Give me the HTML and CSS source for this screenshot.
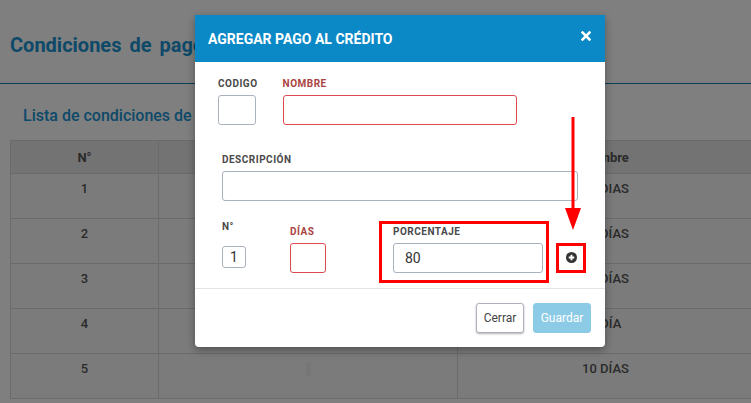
FILE: index.html
```html
<!DOCTYPE html>
<html lang="es">
<head>
    <meta charset="UTF-8">
    <meta name="viewport" content="width=device-width, initial-scale=1.0">
    <title>Condiciones de pago</title>
    <link rel="stylesheet" href="styles.css">
</head>
<body>
    <header class="page-head">
        <h1>Condiciones de pago</h1>
    </header>
    <main class="page-body">
        <h2 class="list-title">Lista de condiciones de pago</h2>
        <table class="grid">
            <colgroup>
                <col class="col-num">
                <col class="col-desc">
                <col class="col-name">
            </colgroup>
            <thead>
                <tr><th>N°</th><th></th><th>Nombre</th></tr>
            </thead>
            <tbody>
                <tr><td>1</td><td></td><td>30 DIAS</td></tr>
                <tr><td>2</td><td></td><td>15 DÍAS</td></tr>
                <tr><td>3</td><td></td><td>45 DÍAS</td></tr>
                <tr><td>4</td><td></td><td>1 DÍA</td></tr>
                <tr><td>5</td><td><span class="ghost"></span></td><td>10 DÍAS</td></tr>
            </tbody>
        </table>
    </main>

    <div class="backdrop"></div>

    <div class="modal">
        <div class="modal-head">
            <h3>AGREGAR PAGO AL CRÉDITO</h3>
            <button class="close" type="button">
                <svg width="10" height="10" viewBox="0 0 10 10"><path d="M1.5 1.5 L8.5 8.5 M8.5 1.5 L1.5 8.5" stroke="#fff" stroke-width="2.6" stroke-linecap="square"/></svg>
            </button>
        </div>
        <div class="modal-body">
            <div class="row row-top">
                <div class="field f-code">
                    <label>CODIGO</label>
                    <input type="text">
                </div>
                <div class="field f-name has-error">
                    <label>NOMBRE</label>
                    <input type="text">
                </div>
            </div>
            <div class="row row-desc">
                <div class="field f-desc">
                    <label>DESCRIPCIÓN</label>
                    <input type="text">
                </div>
            </div>
            <div class="row row-quota">
                <div class="field f-no">
                    <label>N°</label>
                    <input type="text" value="1">
                </div>
                <div class="field f-days has-error">
                    <label>DÍAS</label>
                    <input type="text">
                </div>
                <div class="field f-pct marked">
                    <label>PORCENTAJE</label>
                    <input type="text" value="80">
                </div>
                <button class="add marked" type="button">
                    <svg width="11" height="11" viewBox="0 0 12 12"><circle cx="6" cy="6" r="6" fill="#333"/><path d="M6 3 V9 M3 6 H9" stroke="#fff" stroke-width="2"/></svg>
                </button>
            </div>
        </div>
        <div class="modal-foot">
            <button class="btn btn-close" type="button">Cerrar</button>
            <button class="btn btn-save" type="button">Guardar</button>
        </div>
    </div>

    <!-- flecha roja que señala el botón de agregar -->
    <svg class="pointer" width="18" height="116" viewBox="0 0 18 116">
        <rect x="7.5" y="2" width="3" height="92" fill="#f00"/>
        <polygon points="1,93 17,93 9,115" fill="#f00"/>
    </svg>
</body>
</html>
```

FILE: styles.css
```css
html, body { margin: 0; padding: 0; overflow: hidden; }
body { font-family: 'Roboto', 'Liberation Sans', sans-serif; background: #fff; width: 751px; height: 403px; position: relative; color: #333; }

.page-head { padding: 33px 10px 26px; border-bottom: 1px solid #1c7fae; }
.page-head h1 { margin: 0; font-size: 20px; line-height: 24px; font-weight: 700; word-spacing: 3px; color: #1a93d2; }

.page-body { padding: 0 0 0 10px; }
.list-title { margin: 22px 0 14px 13px; font-size: 16px; line-height: 20px; font-weight: 500; color: #1a93d2; }

.grid { border-collapse: collapse; table-layout: fixed; width: 743px; background: #f6f6f6; }
.col-num { width: 148px; }
.col-desc { width: 299px; }
.col-name { width: 296px; }
.grid th, .grid td { border: 1px solid #d6d6d6; text-align: center; color: #555; }
.grid th { height: 32px; padding: 0; background: #e6e6e6; font-size: 13px; font-weight: 700; }
.grid td { height: 45px; padding: 5px 8px 0; vertical-align: top; font-size: 13px; line-height: 20px; font-weight: 500; box-sizing: border-box; }
.ghost { display: inline-block; width: 5px; height: 14px; margin-top: 3px; border-radius: 2px; background: #ececec; }

.backdrop { position: absolute; inset: 0; background: rgba(0,0,0,0.5); }

.modal { position: absolute; left: 195px; top: 15px; width: 410px; background: #fff; border-radius: 0 0 4px 4px; box-shadow: 0 3px 9px rgba(0,0,0,0.35); }
.modal-head { height: 47px; background: #0a89c6; display: flex; align-items: center; justify-content: space-between; padding: 0 14px 0 13px; }
.modal-head h3 { margin: 0; color: #fff; font-size: 14px; font-weight: 700; }
.close { border: 0; background: none; padding: 0; width: 10px; height: 10px; display: flex; margin-top: -5px; }

.modal-body { padding: 15px 27px 5px 23px; }
.row { display: flex; align-items: flex-start; }
.field label { display: block; font-size: 10px; line-height: 14px; font-weight: 700; letter-spacing: 0.5px; color: #4a4a4a; }
.field input { display: block; box-sizing: border-box; height: 30px; border: 1px solid #a9b2be; border-radius: 3px; background: #fff; font-family: inherit; font-size: 14px; color: #333; padding: 0 11px; outline: none; }
.has-error label { color: #a94442; }
.has-error input { border-color: #dc4a50; }

.row-top label { margin-bottom: 4px; }
.f-code input { width: 38px; }
.f-name { margin-left: 25px; }
.f-name input { width: 234px; }

.row-desc { margin-top: 28px; padding-left: 4px; }
.row-desc label { margin-bottom: 4px; }
.f-desc input { width: 356px; }

.row-quota { margin-top: 19px; padding-left: 4px; }
.row-quota > * { flex-shrink: 0; }
.f-no label { margin-bottom: 12px; }
.f-no input { width: 24px; height: 22px; padding: 0; text-align: center; }
.f-days { margin-top: 5px; margin-left: 44px; }
.f-days label { margin-bottom: 4px; }
.f-days input { width: 36px; }
.f-pct { margin-left: 53px; margin-top: 1px; width: 170px; box-sizing: border-box; padding: 1px 3px 7px 11px; }
.f-pct label { margin-bottom: 4px; }
.f-pct input { width: 150px; }
.marked { border: 3px solid #f00; }
.add { margin: 23px 0 0 7px; width: 30px; height: 30px; box-sizing: border-box; background: #fff; display: flex; align-items: center; justify-content: center; padding: 0 0 1px 1px; }

.modal-foot { border-top: 1px solid #e3e3e3; display: flex; justify-content: flex-end; gap: 9px; padding: 14px 14px 14px; }
.btn { height: 30px; border-radius: 3px; font-family: inherit; font-size: 12px; padding: 0; }
.btn-close { width: 48px; background: #fff; border: 1px solid #aeb3bb; color: #444; box-shadow: 0 1px 2px rgba(0,0,0,0.3); }
.btn-save { width: 58px; background: #8ccbe6; border: 1px solid #8ccbe6; color: #fff; }

.pointer { position: absolute; left: 564px; top: 115px; }
```
